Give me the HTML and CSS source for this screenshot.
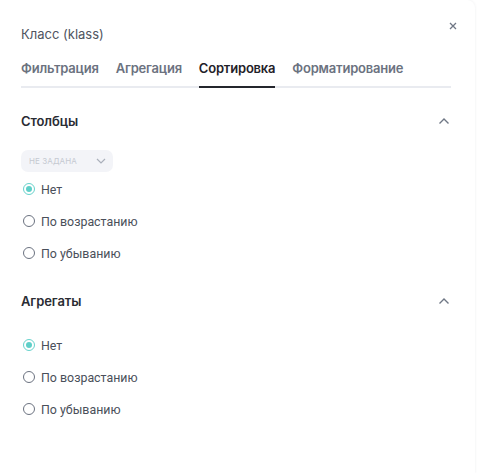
FILE: index.html
```html
<!DOCTYPE html>
<html lang="ru">
<head>
    <meta charset="UTF-8">
    <title>Класс (klass)</title>
    <link rel="stylesheet" href="styles.css">
</head>
<body>

<div class="panel">
    <div class="panel-header">
        <div class="panel-title">Класс (klass)</div>
        <button class="close-btn" aria-label="Закрыть">
            <svg width="8" height="8" viewBox="0 0 8 8"><path d="M1 1L7 7M7 1L1 7" stroke="#6f7785" stroke-width="1.3" fill="none"/></svg>
        </button>
    </div>

    <!--Tabs-->
    <div class="tabs">
        <div class="tab">Фильтрация</div>
        <div class="tab">Агрегация</div>
        <div class="tab active">Сортировка</div>
        <div class="tab">Форматирование</div>
    </div>

    <div class="section">
        <div class="section-header">
            <span>Столбцы</span>
            <svg class="chevron" width="12" height="8" viewBox="0 0 12 8"><path d="M1.5 6.5L6 2L10.5 6.5" stroke="#6f7785" stroke-width="1.4" fill="none"/></svg>
        </div>
        <div class="select">
            <span>НЕ ЗАДАНА</span>
            <svg width="10" height="6" viewBox="0 0 10 6"><path d="M1 1L5 5L9 1" stroke="#aab0bb" stroke-width="1.2" fill="none"/></svg>
        </div>
        <div class="radio-list">
            <label class="radio checked"><span class="dot"></span>Нет</label>
            <label class="radio"><span class="dot"></span>По возрастанию</label>
            <label class="radio"><span class="dot"></span>По убыванию</label>
        </div>
    </div>

    <div class="section">
        <div class="section-header">
            <span>Агрегаты</span>
            <svg class="chevron" width="12" height="8" viewBox="0 0 12 8"><path d="M1.5 6.5L6 2L10.5 6.5" stroke="#6f7785" stroke-width="1.4" fill="none"/></svg>
        </div>
        <div class="radio-list spaced">
            <label class="radio checked"><span class="dot"></span>Нет</label>
            <label class="radio"><span class="dot"></span>По возрастанию</label>
            <label class="radio"><span class="dot"></span>По убыванию</label>
        </div>
    </div>
</div>

</body>
</html>
```

FILE: styles.css
```css
body {
    font-family: Inter, "Noto Sans", sans-serif;
    background-color: #fff;
    margin: 0;
}

.panel {
    width: 475px;
    height: 473px;
    box-sizing: border-box;
    padding: 0 24px 0 21px;
    background: #fff;
    border-radius: 0 8px 0 0;
    box-shadow: 0 0 3px rgba(30, 40, 60, 0.08);
}

.panel-header {
    display: flex;
    justify-content: space-between;
    align-items: flex-start;
    padding-top: 26px;
}

.panel-title {
    font-size: 13px;
    line-height: 16px;
    color: #50555f;
}

.close-btn {
    border: none;
    background: none;
    padding: 0;
    margin: -7px -9px 0 0;
    width: 14px;
    height: 14px;
    display: flex;
    align-items: center;
    justify-content: center;
    cursor: pointer;
}

.tabs {
    display: flex;
    gap: 17px;
    margin-top: 18px;
    border-bottom: 2px solid #e9ebf0;
}

.tab {
    font-size: 13px;
    line-height: 16px;
    font-weight: 600;
    letter-spacing: -0.2px;
    color: #6b7280;
    padding-bottom: 10px;
    margin-bottom: -2px;
    border-bottom: 2px solid transparent;
}

.tab.active {
    color: #1f2128;
    border-bottom-color: #24262d;
}

.section {
    padding-top: 21px;
}

.section + .section {
    padding-top: 20px;
}

.section-header {
    display: flex;
    justify-content: space-between;
    align-items: center;
    height: 24px;
    font-size: 13px;
    font-weight: 600;
    letter-spacing: -0.1px;
    color: #2a2c33;
}

.chevron {
    margin-right: 1px;
}

.select {
    display: flex;
    justify-content: space-between;
    align-items: center;
    width: 92px;
    height: 22px;
    box-sizing: border-box;
    margin-top: 17px;
    padding: 0 7px 0 8px;
    background: #f3f4f8;
    border-radius: 7px;
    font-size: 8px;
    color: #c5c9d1;
    letter-spacing: 0.1px;
}

.radio-list {
    margin-top: 1px;
}

.radio-list.spaced {
    margin-top: 16px;
}

.radio {
    display: flex;
    align-items: center;
    height: 32px;
    font-family: Roboto, sans-serif;
    font-size: 12.4px;
    color: #4a4f5a;
}

.radio .dot {
    width: 12px;
    height: 12px;
    box-sizing: border-box;
    border: 1.4px solid #6b7280;
    border-radius: 50%;
    margin: 0 6px 0 2px;
    display: flex;
    align-items: center;
    justify-content: center;
}

.radio.checked .dot {
    border-color: #67d2cc;
}

.radio.checked .dot::after {
    content: "";
    width: 6px;
    height: 6px;
    border-radius: 50%;
    background: #5fcfc8;
}
```
